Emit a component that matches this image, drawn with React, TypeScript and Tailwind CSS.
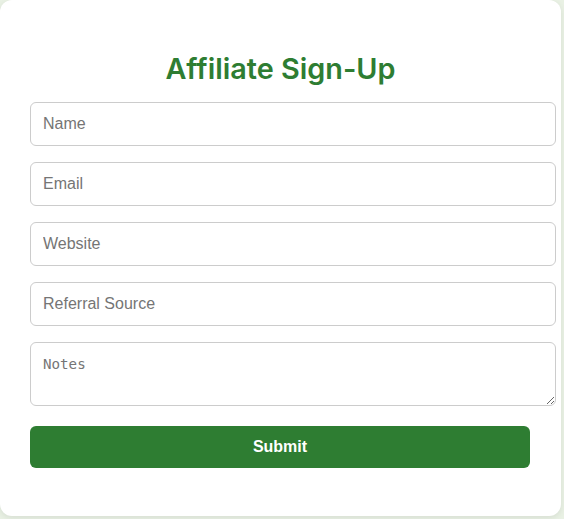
export default function App() {
  const fields = ['Name', 'Email', 'Website', 'Referral Source']

  return (
    <div className="min-h-screen bg-[#e9f1e4]">
      <div className="w-[561px] bg-white rounded-xl shadow-[0_2px_6px_rgba(0,0,0,0.08)] px-[30px] pt-[52px] pb-[48px]">
        <h2 className="text-center text-[28.8px] leading-[34px] font-semibold text-[#2e7d32] font-['Inter',sans-serif] mb-[16px]">
          Affiliate Sign-Up
        </h2>

        <form className="flex flex-col" onSubmit={(e) => e.preventDefault()}>
          {fields.map((f) => (
            <input
              key={f}
              type="text"
              placeholder={f}
              className="block w-[526px] h-[44px] mb-4 px-3 border border-[#cccccc] rounded-md text-base font-['Liberation_Sans',Arial,sans-serif] text-[#222] placeholder:text-[#757575] outline-none"
            />
          ))}
          <textarea
            placeholder="Notes"
            className="block w-[526px] h-[64px] mb-5 px-3 pt-[13px] pb-3 border border-[#cccccc] rounded-md text-[14.2px] leading-[16px] font-['DejaVu_Sans_Mono',monospace] text-[#222] placeholder:text-[#757575] outline-none"
          />
          <button
            type="submit"
            className="w-[500px] h-[42px] bg-[#2e7d32] text-white font-bold text-base font-['Liberation_Sans',Arial,sans-serif] rounded-md"
          >
            Submit
          </button>
        </form>
      </div>
    </div>
  )
}
